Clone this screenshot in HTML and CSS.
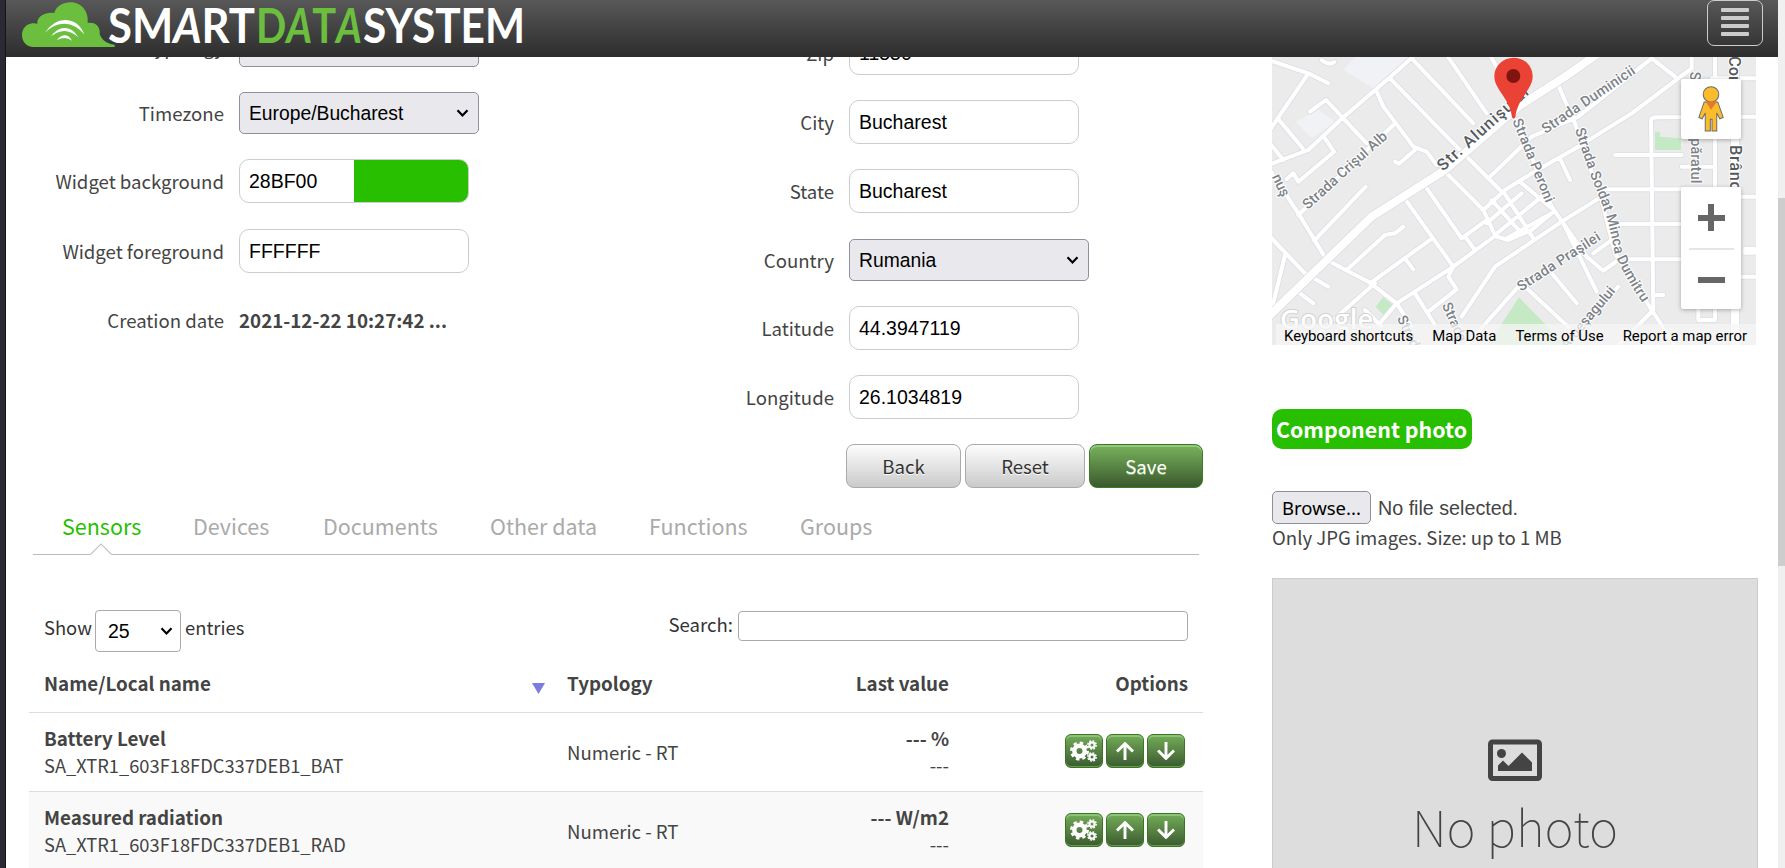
FILE: index.html
```html
<!DOCTYPE html>
<html lang="en">
<head>
<meta charset="utf-8">
<title>Smart Data System</title>
<link rel="stylesheet" href="styles.css">
</head>
<body>
<svg class="defs" aria-hidden="true">
  <symbol id="chevron" viewBox="0 0 12 8"><path d="M1 1.2 6 6.4 11 1.2" fill="none" stroke="#000" stroke-width="2.2"/></symbol>
  <symbol id="gears" viewBox="0 0 28 22">
    <g fill="none" stroke="#fff">
      <circle cx="9.5" cy="11" r="5.2" stroke-width="4.4"/>
      <circle cx="9.5" cy="11" r="8.2" stroke-width="2.6" stroke-dasharray="3.44 3"/>
      <circle cx="22" cy="5" r="2.6" stroke-width="2.2"/>
      <circle cx="22" cy="5" r="4.2" stroke-width="1.4" stroke-dasharray="1.8 1.5"/>
      <circle cx="22" cy="17" r="2.6" stroke-width="2.2"/>
      <circle cx="22" cy="17" r="4.2" stroke-width="1.4" stroke-dasharray="1.8 1.5"/>
    </g>
  </symbol>
  <symbol id="up" viewBox="0 0 18 18"><path d="M9 18V2M1 9.5 9 1.6l8 7.9" fill="none" stroke="#fff" stroke-width="2.9"/></symbol>
  <symbol id="down" viewBox="0 0 18 18"><path d="M9 0v16M1 8.5l8 7.9 8-7.9" fill="none" stroke="#fff" stroke-width="2.9"/></symbol>
</svg>

<div class="shell">
  <div class="rail"></div>
  <div class="page">
    <header class="topbar">
      <svg class="logo" viewBox="0 0 530 57">
        <g transform="scale(.33333) translate(-18 0)">
          <path fill="#6cbe3f" d="M66 105C66 86 79 72 97 70Q105 69 112 71C110 52 132 35 163 39C168 18 190 7 212 7C245 7 267 36 263 69C281 65 298 76 299 94C295 112 320 134 344 134V141H100C80 141 66 125 66 105Z"/>
          <g fill="#fff">
            <path d="M134 99Q160 60 195 60Q235 60 253 103Q226 72 195 71Q160 71 134 99Z"/>
            <path d="M153 109Q172 84 193 84Q219 84 235 112Q215 94 193 93Q172 94 153 109Z"/>
            <path d="M171 120Q182 106 194 106Q207 106 216 122Q205 114 194 114Q183 114 171 120Z"/>
          </g>
        </g>
        <g class="wordmark">
          <text x="102" y="43" fill="#fff" textLength="147" lengthAdjust="spacingAndGlyphs">SM<tspan font-style="italic">A</tspan>RT</text>
          <text x="250" y="43" fill="#6cbe3f" textLength="106" lengthAdjust="spacingAndGlyphs">D<tspan font-style="italic">A</tspan>T<tspan font-style="italic">A</tspan></text>
          <text x="357" y="43" fill="#fff" textLength="162" lengthAdjust="spacingAndGlyphs">SYSTEM</text>
        </g>
      </svg>
      <button class="menu" aria-label="Menu"><i></i><i></i><i></i><i></i></button>
    </header>

    <main class="content">
      <section class="main">
        <div class="forms">
          <div class="form form-left">
            <div class="row"><label>Typology</label><div class="select"></div></div>
            <div class="row"><label>Timezone</label><div class="select">Europe/Bucharest<svg><use href="#chevron"/></svg></div></div>
            <div class="row"><label>Widget background</label><div class="input swatch">28BF00</div></div>
            <div class="row"><label>Widget foreground</label><div class="input">FFFFFF</div></div>
            <div class="row static"><label>Creation date</label><strong>2021-12-22 10:27:42 ...</strong></div>
          </div>
          <div class="form form-right">
            <div class="row"><label>Zip</label><div class="input">11550</div></div>
            <div class="row"><label>City</label><div class="input">Bucharest</div></div>
            <div class="row"><label>State</label><div class="input">Bucharest</div></div>
            <div class="row country"><label>Country</label><div class="select">Rumania<svg><use href="#chevron"/></svg></div></div>
            <div class="row"><label>Latitude</label><div class="input">44.3947119</div></div>
            <div class="row"><label>Longitude</label><div class="input">26.1034819</div></div>
            <div class="actions">
              <button class="btn back">Back</button><button class="btn reset">Reset</button><button class="btn save">Save</button>
            </div>
          </div>
        </div>

        <nav class="tabs">
          <a class="active">Sensors<svg class="notch" viewBox="0 0 24 13"><path d="M0 13 12 .8 24 13Z" fill="#fff"/><path d="M.5 12.5 12 1l11.500 11.500" fill="none" stroke="#bbb" stroke-width="1.200"/></svg></a>
          <a>Devices</a><a>Documents</a><a>Other data</a><a>Functions</a><a>Groups</a>
        </nav>

        <div class="tools">
          <div class="length"><span>Show</span><div class="count">25<svg><use href="#chevron"/></svg></div><span>entries</span></div>
          <div class="search"><span>Search:</span><div class="box"></div></div>
        </div>

        <div class="table">
          <div class="tr head"><div class="name">Name/Local name<i class="sort"></i></div><div>Typology</div><div class="num">Last value</div><div class="opt">Options</div></div>
          <div class="tr">
            <div><b>Battery Level</b><br><span class="code">SA_XTR1_603F18FDC337DEB1_BAT</span></div><div>Numeric - RT</div><div class="num"><b>--- %</b><br>---</div>
            <div class="icons"><button><svg class="g"><use href="#gears"/></svg></button><button><svg><use href="#up"/></svg></button><button><svg><use href="#down"/></svg></button></div>
          </div>
          <div class="tr odd">
            <div><b>Measured radiation</b><br><span class="code">SA_XTR1_603F18FDC337DEB1_RAD</span></div><div>Numeric - RT</div><div class="num"><b>--- W/m2</b><br>---</div>
            <div class="icons"><button><svg class="g"><use href="#gears"/></svg></button><button><svg><use href="#up"/></svg></button><button><svg><use href="#down"/></svg></button></div>
          </div>
        </div>
      </section>

      <aside class="side">
        <div class="map">
          <svg class="streets" viewBox="21 171 1452 864">
            <defs>
              <g id="minor" fill="none" stroke-linejoin="round" stroke-linecap="round">
                <path d="M10 495 130 450 235 352 375 232 450 165M440 175 625 370M545 165 665 340M375 235 575 440 705 570M675 165 700 210M10 180 130 220 190 250M130 220 38 355 113 445M38 355 15 390M15 430 55 480M135 335 183 300 235 355 305 430M335 275 355 320 445 440 485 455 515 495M390 485 402 491 450 450M385 375 100 645M180 415 207 455 100 545 85 520 65 537M15 510 100 640 185 780 310 845 395 910M148 722 302 560M245 810 360 705 390 700 415 680M315 850 495 720M420 775 445 808M415 590 565 800 550 830 575 868 490 935M475 550 590 715 665 660M600 710 630 750M395 910 565 800 690 708 730 720 800 690 860 640"/>
                <path d="M590 950 690 800 890 665 1010 590M530 505 655 630 690 705M655 630 720 570 800 520 940 440 1100 340 1280 205M680 600 770 700M715 575 805 715M765 545 860 625M665 670 770 580M690 705 830 590M720 718 860 640M670 535 800 410 940 350 1160 175M875 245 930 370 960 460 1010 600 1050 760 1160 930 1230 1035M745 350 800 470 860 620 895 670 965 770 1015 812 1060 780M885 475 915 540M1160 175 1230 230M1280 165V205M1165 930 1158 360Q1160 352 1180 352L1480 350M1050 465H1250M1010 568H1250M1060 672H1250M1090 778H1250M1350 165V960M1340 235H1480M1340 500H1250M1420 590H1480M1420 830H1480M1300 900V960H1350M760 860 600 1040M780 860 920 990M860 820 935 910M895 670 995 875M450 880 510 975M330 850 160 1000M60 765 15 950M15 710 120 820 190 860M105 880 145 910M985 760 1040 720M1165 930 1060 1035M1175 885H1195M395 910 340 975M300 930 350 980M395 910 440 980M1060 860 940 980"/>
                <path d="M170 180q22 18 38 6"/>
              </g>
              <path id="soldat" d="M930 388Q965 500 1000 585T1050 765Q1090 850 1140 920"/>
            </defs>
            <rect x="0" y="150" width="1500" height="900" fill="#ebebeb"/>
            <path fill="#f0f2f5" d="M270 171H430L325 265 235 210ZM160 330 210 365 140 415 92 365Z"/>
            <path fill="#c5e8c5" d="M1170 395H1185V410L1248 415V450H1170ZM355 892 383 915 358 948 332 920ZM762 892 840 972 900 1035H670L710 972Z"/>
            <use href="#minor" stroke="#dddfe6" stroke-width="17"/>
            <use href="#minor" stroke="#fff" stroke-width="12"/>
            <path d="M0 960 185 780 320 650 540 510 760 320 900 230 1000 160M1410 165V1035M1435 752H1480" fill="none" stroke="#dddfe6" stroke-width="29"/>
            <path d="M0 960 185 780 320 650 540 510 760 320 900 230 1000 160M1410 165V1035M1435 752H1480" fill="none" stroke="#fff" stroke-width="24"/>
            <g class="names">
              <text transform="translate(128 630) rotate(-42)" textLength="325">Strada Crişul Alb</text>
              <text transform="translate(842 402) rotate(-34)" textLength="328">Strada Duminicii</text>
              <text transform="translate(742 362) rotate(68)" textLength="268">Strada Peroni</text>
              <text transform="translate(768 875) rotate(-33)" textLength="288">Strada Praşilei</text>
              <text><textPath href="#soldat" textLength="562">Strada Soldat Minca Dumitru</textPath></text>
              <text transform="translate(20 530) rotate(65)">nuş</text>
              <text transform="translate(395 955) rotate(64)">Strada</text>
              <text transform="translate(530 915) rotate(66)">Strada</text>
              <text transform="translate(905 1050) rotate(-50)" textLength="230">Argeşagului</text>
              <text transform="translate(1275 215) rotate(90)">S</text>
              <text transform="translate(1278 415) rotate(90)" textLength="135">păratul</text>
              <g class="big">
                <text transform="translate(534 515) rotate(-42)" textLength="350">Str. Alunişului</text>
                <text transform="translate(1392 168) rotate(90)">Cor</text>
                <text transform="translate(1394 435) rotate(90)" textLength="135">Brânc</text>
              </g>
            </g>
            <text class="google" x="45" y="988" textLength="280">Google</text>
            <path d="M746 173C713 173 688 198 688 229C688 270 736 296 741 352Q746 360 751 352C756 296 803 270 803 229C803 198 779 173 746 173Z" fill="#ea4335"/>
            <circle cx="745" cy="228" r="21" fill="#811411"/>
          </svg>
          <div class="pegman">
            <svg viewBox="0 0 76 136"><g fill="#fbbc2c" stroke="#6b6b6b" stroke-width="3"><path d="M18 47H58L74 93 64 97 55 80V133H41V98H36V133H21V80L12 97 2 93Z"/><circle cx="38" cy="25" r="23"/></g><path d="M22 46H56L38 70Z" fill="#e07b2c"/></svg>
          </div>
          <div class="zoom"><span class="plus"></span><span class="rule"></span><span class="minus"></span></div>
          <div class="credits"><span>Keyboard shortcuts</span><span>Map Data</span><span>Terms of Use</span><span>Report a map error</span></div>
        </div>
        <h3 class="pill">Component photo</h3>
        <div class="file"><button>Browse...</button><span>No file selected.</span></div>
        <p class="hint">Only JPG images. Size: up to 1 MB</p>
        <div class="photo">
          <svg viewBox="0 0 54 42"><rect x="2.500" y="3" width="49" height="36.500" rx="2" fill="none" stroke="#444" stroke-width="5"/><circle cx="13.500" cy="14.500" r="4.500" fill="#444"/><path fill="#444" d="M10 32V26.500L15 21.500 20.500 27 34 13.500 44 23.500V32Z"/></svg>
          <span>No photo</span>
        </div>
      </aside>
    </main>
  </div>
  <div class="scroll"><div class="thumb"></div></div>
</div>
</body>
</html>
```
FILE: styles.css
```css
* { box-sizing: border-box; }
body {
  margin: 0;
  height: 868px;
  overflow: hidden;
  background: #fff;
  color: #444;
  font: 18.6px/27px "Noto Sans CJK SC", sans-serif;
}
button { font: inherit; padding: 0; }
.defs { display: none; }

.shell { display: flex; height: 868px; }
.rail { width: 6px; background: #2b2a33; border-right: 1px solid #15141a; }
.page { width: 1772px; height: 868px; overflow: hidden; display: flex; flex-direction: column; }
.scroll { width: 7px; background: #f0f0f0; padding-top: 198px; }
.thumb { height: 368px; background: #cdcdcd; }

.topbar {
  position: relative;
  z-index: 2;
  flex: none;
  height: 57px;
  display: flex;
  justify-content: space-between;
  align-items: flex-start;
  padding-right: 15px;
  background: linear-gradient(#585858, #2d2d2d);
}
.logo { width: 530px; height: 57px; }
.wordmark { font: 700 47.500px Lato, sans-serif; }
.menu {
  width: 56px;
  height: 46px;
  display: flex;
  flex-direction: column;
  align-items: center;
  justify-content: center;
  gap: 4px;
  padding-bottom: 2px;
  background: none;
  border: 1px solid #ccc;
  border-radius: 7px;
}
.menu i { width: 28px; height: 4px; border-radius: 1px; background: #ccc; }

.content { display: flex; align-items: flex-start; }
.main { width: 1197px; }
.forms { display: flex; height: 431px; align-items: flex-start; }
.form { display: flex; flex-direction: column; gap: 25px; }
.form-left { width: 610px; margin-top: -32px; }
.form-right { margin-top: -26px; }
.row { display: flex; align-items: center; }
.form-left .row:nth-child(n+4) { margin-top: 1px; }
.country { margin-top: 1px; }
.row label { width: 218px; margin-right: 15px; padding-bottom: 1px; text-align: right; }
.static { height: 42px; }
.static strong { padding-bottom: 1px; font-size: 18.800px; }
.input, .select {
  display: flex;
  align-items: center;
  padding: 0 9px;
  color: #000;
  font-family: "Liberation Sans", Arial, sans-serif;
  font-size: 19.500px;
}
.input { width: 230px; height: 44px; border: 1px solid #ccc; border-radius: 10px; background: #fff; }
.select {
  width: 240px;
  height: 42px;
  justify-content: space-between;
  padding-right: 9px;
  border: 1px solid #8f8f9d;
  border-radius: 5px;
  background: #e9e9ed;
  font-size: 19.300px;
}
.select svg, .count svg { width: 13px; height: 8px; }
.swatch { background: linear-gradient(90deg, #fff 50%, #28bf00 50%); }
.actions { display: flex; gap: 4px; margin-left: 230px; }
.btn {
  height: 44px;
  padding-bottom: 2px;
  border: 1px solid #aaa;
  border-radius: 8px;
  background: linear-gradient(#fdfdfd, #cacaca);
  color: #333;
  text-shadow: 0 1px 0 #fff;
}
.back { width: 115px; }
.reset { width: 120px; }
.save {
  width: 114px;
  color: #fff;
  border-color: #3f7a26;
  background: linear-gradient(#78b35c, #3b592e);
  box-shadow: inset 0 2px 0 #92c97c;
  text-shadow: 0 1px 0 #7fb56b;
}

.tabs {
  display: grid;
  grid-template-columns: 131px 130px 167px 159px 151px 1fr;
  width: 1166px;
  height: 67px;
  margin-left: 27px;
  padding: 20px 0 0 29px;
  border-bottom: 1px solid #bbb;
  color: #aaa;
  font-size: 21.500px;
  line-height: 36px;
}
.tabs a { position: relative; }
.active { color: #28bf00; }
.notch { position: absolute; left: 27px; top: 35px; width: 24px; height: 12px; }

.tools { display: flex; justify-content: space-between; align-items: flex-start; height: 97px; padding: 55px 15px 0 38px; }
.length, .search { display: flex; align-items: center; }
.length { gap: 4px; color: #333; font-size: 18.400px; }
.search { gap: 5px; color: #333; }
.length span { padding-bottom: 7px; }
.length span:first-child { width: 47px; }
.search span { padding-bottom: 5px; }
.count {
  width: 86px;
  height: 42px;
  display: flex;
  align-items: center;
  justify-content: space-between;
  padding: 0 7px 0 12px;
  border: 1px solid #aaa;
  border-radius: 4px;
  color: #000;
  font-family: "Liberation Sans", Arial, sans-serif;
  font-size: 19.500px;
}
.box { width: 450px; height: 30px; border: 1px solid #aaa; border-radius: 4px; }

.table { width: 1174px; margin-left: 23px; }
.tr {
  display: grid;
  grid-template-columns: 523px 283px 99px 1fr;
  align-items: center;
  height: 79px;
  padding: 0 15px 2px;
  border-bottom: 1px solid #ddd;
}
.tr b, .head { font-size: 18.800px; }
.code { font-size: 18.300px; }
.head { height: 61px; padding-bottom: 0; font-weight: 700; }
.odd { background: #f9f9f9; }
.name { display: flex; justify-content: space-between; align-items: center; padding-right: 22px; }
.sort { width: 13px; height: 11px; margin-top: 13px; background: #7b7be2; clip-path: polygon(0 0, 100% 0, 50% 100%); }
.num, .opt { text-align: right; white-space: nowrap; }
.icons { display: flex; justify-content: flex-end; gap: 3px; padding-right: 3px; }
.icons button {
  width: 38px;
  height: 34px;
  display: flex;
  align-items: center;
  justify-content: center;
  border: 1px solid #3c7424;
  border-radius: 6px;
  background: linear-gradient(#73ac58, #3c5b30);
  box-shadow: inset 0 2px 0 #8cc477, inset 0 -1px 0 #63a04b;
}
.icons svg { width: 18px; height: 18px; }
.icons .g { width: 28px; height: 22px; }

.side { width: 486px; margin-left: 69px; }
.map { position: relative; width: 484px; height: 288px; overflow: hidden; }
.streets { display: block; width: 484px; height: 288px; }
.names { font: 500 43px Roboto, sans-serif; fill: #7d8288; stroke: #fff; stroke-width: 6px; paint-order: stroke; stroke-linejoin: round; }
.big { font-size: 49px; fill: #55595e; }
.google { font: 600 82px "Open Sans", sans-serif; fill: #fff; stroke: #d2d2d2; stroke-width: 6px; paint-order: stroke; }
.pegman, .zoom {
  position: absolute;
  right: 15px;
  width: 60px;
  background: #fff;
  border-radius: 2px;
  box-shadow: 0 1px 4px rgba(0, 0, 0, .3);
  display: flex;
  align-items: center;
}
.pegman { top: 22px; height: 60px; justify-content: center; }
.pegman svg { width: 26px; height: 46px; }
.zoom { top: 130px; height: 122px; flex-direction: column; justify-content: space-between; padding: 17px 0 26px; }
.plus { width: 27px; height: 27px; background: linear-gradient(#666, #666) center / 27px 6px no-repeat, linear-gradient(#666, #666) center / 6px 27px no-repeat; }
.rule { width: 45px; height: 2px; background: #e6e6e6; margin-bottom: 11px; }
.minus { width: 27px; height: 6px; background: #666; }
.credits {
  position: absolute;
  right: 0;
  bottom: 0;
  width: 480px;
  height: 21px;
  display: flex;
  justify-content: space-between;
  padding: 2px 9px 0 8px;
  background: rgba(245, 245, 245, .75);
  color: #000;
  font: 14.900px/20px Roboto, sans-serif;
}
.pill {
  width: 200px;
  height: 40px;
  margin: 64px 0 42px;
  padding-right: 1px;
  border-radius: 10px;
  background: #28bf00;
  color: #fff;
  font-size: 21.400px;
  line-height: 40px;
  text-align: center;
}
.file { display: flex; align-items: center; gap: 7px; height: 33px; font-family: "Liberation Sans", Arial, sans-serif; font-size: 19.700px; }
.file button {
  width: 99px;
  height: 33px;
  border: 1px solid #8f8f9d;
  border-radius: 5px;
  background: #e9e9ed;
  color: #000;
  font: 18.500px "Noto Sans", sans-serif;
}
.file span { padding-top: 2px; }
.hint { margin: 0; height: 54px; line-height: 26px; }
.photo {
  width: 486px;
  height: 320px;
  display: flex;
  flex-direction: column;
  align-items: center;
  padding-top: 160px;
  border: 1px solid #ccc;
  background: #ddd;
  font-size: 49.600px;
  font-weight: 100;
  line-height: 60px;
}
.photo svg { width: 54px; height: 42px; margin-bottom: 14px; }
```
